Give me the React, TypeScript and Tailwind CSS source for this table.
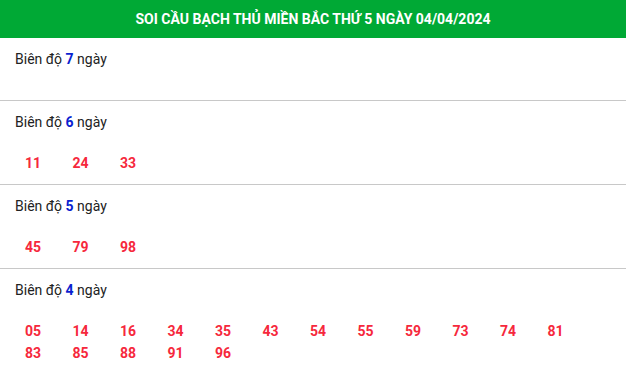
import React from 'react';

interface Section {
  days: number;
  numbers: string[];
}

const sections: Section[] = [
  { days: 7, numbers: [] },
  { days: 6, numbers: ['11', '24', '33'] },
  { days: 5, numbers: ['45', '79', '98'] },
  {
    days: 4,
    numbers: ['05', '14', '16', '34', '35', '43', '54', '55', '59', '73', '74', '81', '83', '85', '88', '91', '96'],
  },
];

const App: React.FC = () => {
  return (
    <div className="w-[626px] bg-white font-['Roboto',sans-serif] text-[14px]">
      {/* Header */}
      <div className="h-[38px] bg-[#00a935] flex items-center justify-center">
        <h2 className="text-white font-bold text-[14px] leading-none uppercase">
          SOI CẦU BẠCH THỦ MIỀN BẮC THỨ 5 NGÀY 04/04/2024
        </h2>
      </div>

      {sections.map((s) => (
        <div key={s.days} className="border-b border-[#c8c8c8] px-[15px] pt-[11px] pb-[10px]">
          <div className="h-[20px] leading-[20px] text-[#222]">
            Biên độ <span className="font-bold text-[#0a1fd0]">{s.days}</span> ngày
          </div>
          <div className="mt-[20px] flex flex-wrap min-h-[1px]">
            {s.numbers.map((n, i) => (
              <span
                key={i}
                className="w-[47.5px] pl-[10px] leading-[22px] font-bold text-[#f6283c]"
              >
                {n}
              </span>
            ))}
          </div>
        </div>
      ))}
    </div>
  );
};

export default App;
